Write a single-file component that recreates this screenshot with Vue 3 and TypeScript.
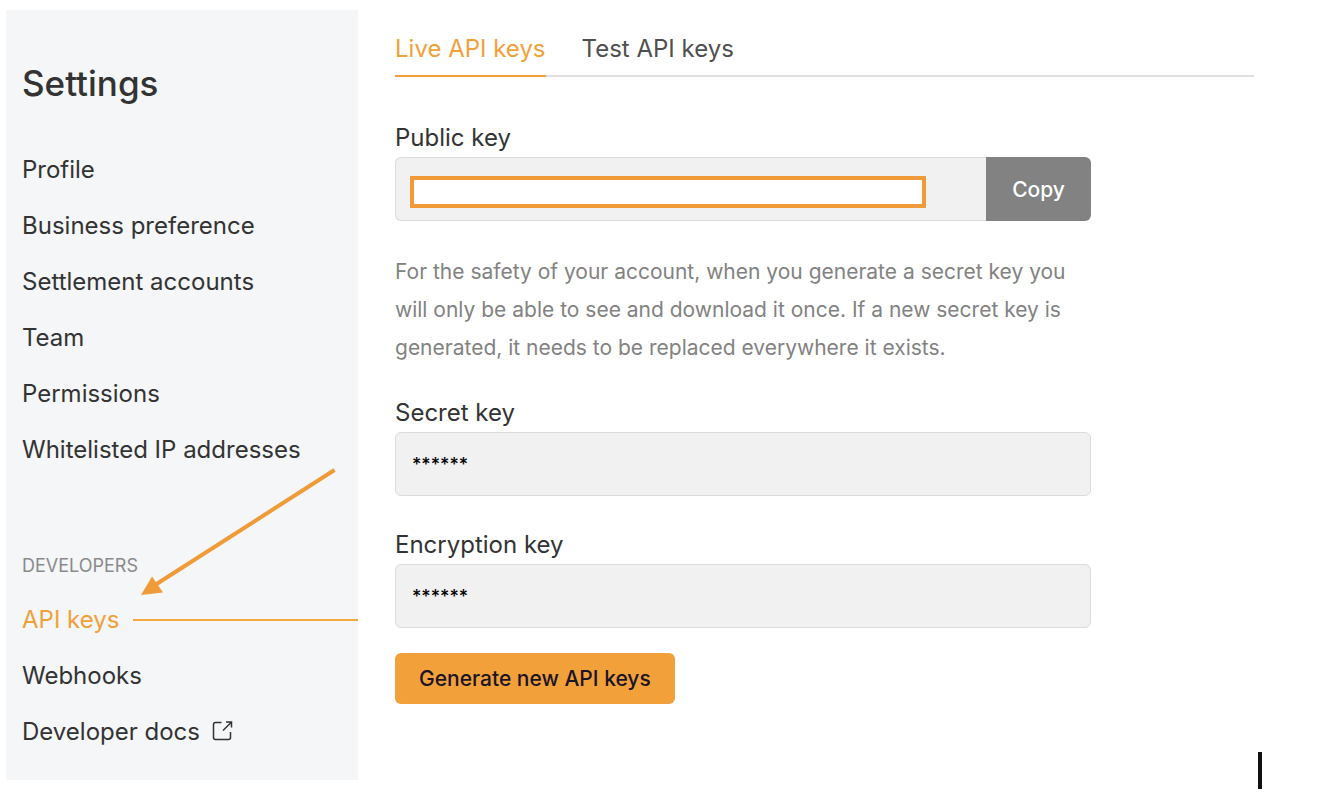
<script setup lang="ts">
import { ref } from 'vue'

const generalLinks: string[] = [
  'Profile',
  'Business preference',
  'Settlement accounts',
  'Team',
  'Permissions',
  'Whitelisted IP addresses',
]
const tabs: string[] = ['Live API keys', 'Test API keys']
const activeTab = ref(0)
const publicKey = ref('')
const secretKey = ref('******')
const encryptionKey = ref('******')
</script>

<template>
  <div class="page">
    <aside class="sidebar">
      <h1 class="title">Settings</h1>
      <nav class="nav" aria-label="Settings">
        <a v-for="link in generalLinks" :key="link" class="nav-link" href="#">{{ link }}</a>
      </nav>
      <h2 class="group">DEVELOPERS</h2>
      <nav class="nav" aria-label="Developers">
        <a class="nav-link active" href="#">API keys</a>
        <a class="nav-link" href="#">Webhooks</a>
        <a class="nav-link docs" href="#">
          Developer docs
          <svg width="22" height="22" viewBox="0 0 22 22" fill="none" stroke="currentColor" stroke-width="1.5" aria-hidden="true">
            <path d="M9.500 1.500H3.500Q1.500 1.500 1.500 3.500V16.500Q1.500 18.500 3.500 18.500H16.500Q18.500 18.500 18.500 16.500V11" />
            <path d="M11 9.500L19.500 1M14 1H19.500V6.500" />
          </svg>
        </a>
      </nav>
      <svg class="pointer" width="196" height="128" viewBox="0 0 196 128" aria-hidden="true">
        <path d="M193.500 2L14 117" stroke="#f19a38" stroke-width="4" fill="none" />
        <path d="M0 127L11 108.500L22 124.500Z" fill="#f19a38" />
      </svg>
    </aside>

    <main class="content">
      <div class="tabs" role="tablist">
        <button
          v-for="(tab, i) in tabs"
          :key="tab"
          type="button"
          role="tab"
          class="tab"
          :class="{ selected: i === activeTab }"
          :aria-selected="i === activeTab"
          @click="activeTab = i"
        >{{ tab }}</button>
      </div>

      <form class="keys" @submit.prevent>
        <label class="label" for="public-key">Public key</label>
        <div class="copy-row">
          <div class="field public">
            <input id="public-key" v-model="publicKey" class="masked" type="text" readonly />
          </div>
          <button class="copy" type="button">Copy</button>
        </div>

        <p class="note">
          For the safety of your account, when you generate a secret key you will only be able to
          see and download it once. If a new secret key is generated, it needs to be replaced
          everywhere it exists.
        </p>

        <label class="label" for="secret-key">Secret key</label>
        <input id="secret-key" v-model="secretKey" class="field secret" type="text" readonly />

        <label class="label next" for="encryption-key">Encryption key</label>
        <input id="encryption-key" v-model="encryptionKey" class="field secret" type="text" readonly />

        <button class="generate" type="submit">Generate new API keys</button>
      </form>
      <span class="caret" aria-hidden="true"></span>
    </main>
  </div>
</template>

<style>
body {
  margin: 0;
  background: #fff;
}
</style>

<style scoped>
* {
  box-sizing: border-box;
}

.page {
  display: flex;
  align-items: flex-start;
  padding: 10px 73px 20px 6px;
  font-family: Inter, "Liberation Sans", sans-serif;
  color: #333;
}

button,
input {
  font-family: inherit;
}

.sidebar {
  position: relative;
  flex: 0 0 352px;
  padding: 49px 0 32px 16px;
  background: #f4f6f8;
}

.title {
  margin: 0 0 47px;
  font-size: 35px;
  line-height: 48px;
  font-weight: 500;
}

.nav {
  display: flex;
  flex-direction: column;
  gap: 24px;
}

.nav-link {
  display: flex;
  align-items: center;
  font-size: 24px;
  line-height: 32px;
  color: #333;
  text-decoration: none;
  white-space: nowrap;
}

.group {
  margin: 88px 0 26px;
  font-size: 18px;
  line-height: 24px;
  font-weight: 400;
  color: #8a8a8a;
}

.active {
  gap: 14px;
  color: #f2a03a;
}

.active::after {
  content: "";
  flex: 1;
  height: 2px;
  background: #f2a93f;
}

.docs {
  gap: 12px;
}

.pointer {
  position: absolute;
  left: 135px;
  top: 458px;
}

.content {
  flex: 1;
  min-width: 0;
  padding: 23px 0 0 37px;
}

.tabs {
  display: flex;
  gap: 36px;
  border-bottom: 2px solid #e0e0e0;
}

.tab {
  margin: 0 0 -2px;
  padding: 0 0 10px;
  border: 0;
  border-bottom: 2px solid transparent;
  background: none;
  font-size: 24px;
  line-height: 32px;
  color: #4f4f4f;
}

.selected {
  color: #f2a03a;
  border-bottom-color: #f2a03a;
}

.keys {
  max-width: 696px;
  margin-top: 45px;
}

.label {
  display: block;
  margin-bottom: 3px;
  font-size: 24px;
  line-height: 32px;
}

.next {
  margin-top: 33px;
}

.copy-row {
  display: flex;
}

.field {
  display: block;
  width: 100%;
  height: 64px;
  border: 1px solid #dcdcdc;
  border-radius: 6px;
  background: #f1f1f1;
}

.public {
  flex: 1;
  display: flex;
  align-items: flex-end;
  padding: 0 60px 12px 14px;
  border-right: 0;
  border-radius: 6px 0 0 6px;
}

.masked {
  width: 100%;
  height: 32px;
  padding: 0 8px;
  border: 4px solid #f19a38;
  background: #fff;
  font-size: 18px;
}

.secret {
  padding: 0 16px;
  font-size: 18px;
  font-weight: 500;
  color: #000;
}

.copy {
  width: 105px;
  border: 0;
  border-radius: 0 6px 6px 0;
  background: #828282;
  color: #fff;
  font-size: 21px;
  font-weight: 500;
}

.note {
  margin: 32px 0 30px;
  font-size: 21px;
  line-height: 38px;
  color: #828282;
}

.generate {
  display: block;
  margin-top: 25px;
  height: 51px;
  padding: 0 24px;
  border: 0;
  border-radius: 6px;
  background: #f2a03a;
  color: #1b1425;
  font-size: 21px;
  font-weight: 500;
}

.caret {
  display: block;
  width: 4px;
  height: 37px;
  margin: 48px -8px 0 auto;
  background: #111;
}
</style>
